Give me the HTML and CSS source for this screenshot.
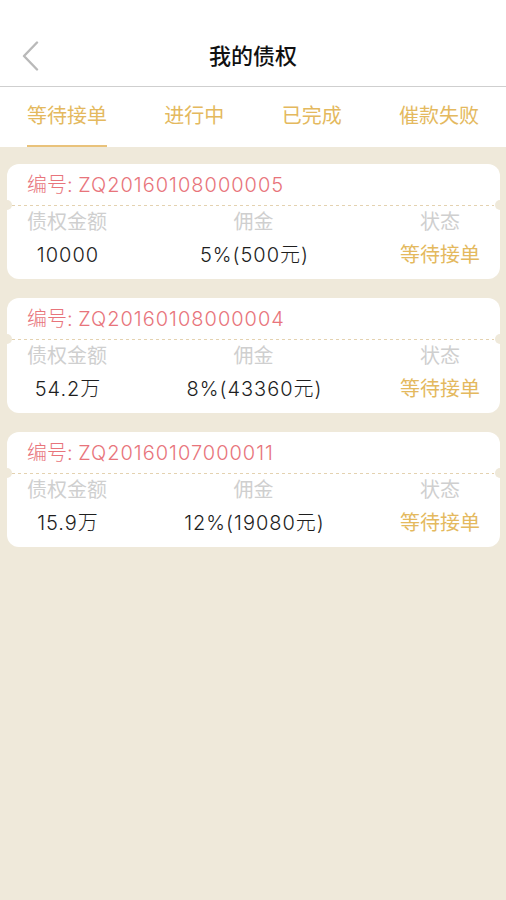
FILE: index.html
```html
<!DOCTYPE html>
<html lang="zh">
<head>
<meta charset="utf-8">
<title>我的债权</title>
<link rel="stylesheet" href="styles.css">
</head>
<body>
<header class="nav">
  <div class="nav-left">
    <svg class="back" width="18" height="30" viewBox="0 0 18 30"><path d="M16 1.5 L3 15 L16 28.5" fill="none" stroke="#b9b9b9" stroke-width="2.4" stroke-linecap="round" stroke-linejoin="round"/></svg>
  </div>
  <h1 class="title">我的债权</h1>
  <div class="nav-right"></div>
</header>
<nav class="tabs">
  <span class="tab active">等待接单</span>
  <span class="tab">进行中</span>
  <span class="tab">已完成</span>
  <span class="tab">催款失败</span>
</nav>
<main class="list">
  <section class="card">
    <div class="card-no">编号: <span class="num">ZQ20160108000005</span></div>
    <div class="dash"></div>
    <div class="grid labels"><span>债权金额</span><span>佣金</span><span>状态</span></div>
    <div class="grid values"><span class="num">10000</span><span class="num">5%(500元)</span><span class="status">等待接单</span></div>
  </section>
  <section class="card">
    <div class="card-no">编号: <span class="num">ZQ20160108000004</span></div>
    <div class="dash"></div>
    <div class="grid labels"><span>债权金额</span><span>佣金</span><span>状态</span></div>
    <div class="grid values"><span class="num">54.2万</span><span class="num">8%(43360元)</span><span class="status">等待接单</span></div>
  </section>
  <section class="card">
    <div class="card-no">编号: <span class="num">ZQ20160107000011</span></div>
    <div class="dash"></div>
    <div class="grid labels"><span>债权金额</span><span>佣金</span><span>状态</span></div>
    <div class="grid values"><span class="num">15.9万</span><span class="num">12%(19080元)</span><span class="status">等待接单</span></div>
  </section>
</main>
</body>
</html>
```

FILE: styles.css
```css
* { box-sizing: border-box; }
html, body { margin: 0; padding: 0; }
body {
  background: #efe9da;
  font-family: "Inter", "Noto Sans CJK SC", sans-serif;
  width: 506px;
  min-height: 900px;
}
.nav {
  background: #fff;
  height: 87px;
  padding-top: 26px;
  border-bottom: 1px solid #cfcfcf;
  display: grid;
  grid-template-columns: 1fr auto 1fr;
  align-items: center;
}
.nav-left { padding-left: 21px; height: 60px; display: flex; align-items: center; }
.back { display: block; }
.title {
  margin: 0;
  font-size: 22px;
  font-weight: 500;
  color: #111;
  line-height: 60px;
}
.tabs {
  background: #fff;
  height: 60px;
  display: flex;
  justify-content: space-between;
  padding: 0 27px;
}
.tab {
  font-size: 20px;
  color: #e4b95e;
  line-height: 58px;
  height: 60px;
  border-bottom: 2px solid transparent;
}
.tab.active { border-bottom-color: #e9c27a; }
.list {
  padding: 17px 6px 0 7px;
  display: flex;
  flex-direction: column;
  gap: 19px;
}
.card {
  position: relative;
  background: #fff;
  border-radius: 12px;
  height: 115px;
  padding: 7px 0 0;
}
.card::before, .card::after {
  content: "";
  position: absolute;
  top: 36px;
  width: 10px;
  height: 10px;
  border-radius: 50%;
  background: #efe9da;
}
.card::before { left: -5px; }
.card::after { right: -5px; }
.card-no {
  padding-left: 20px;
  font-size: 20px;
  line-height: 28px;
  color: #e8747b;
  font-weight: 300;
}
.num { letter-spacing: 1px; }
.values .num { margin-left: 2px; }
.dash {
  margin: 6px 6px 0 5px;
  height: 1px;
  background-image: linear-gradient(to right, #e4d2b0 50%, transparent 50%);
  background-size: 6px 1px;
}
.grid {
  display: grid;
  grid-template-columns: 120px 1fr 120px;
  text-align: center;
  font-size: 20px;
  line-height: 28px;
}
.labels { margin-top: 2px; color: #cfcfcf; }
.values { margin-top: 5px; color: #1e1e1e; font-weight: 300; }
.values .status { color: #e4b95e; font-weight: 400; }
```
